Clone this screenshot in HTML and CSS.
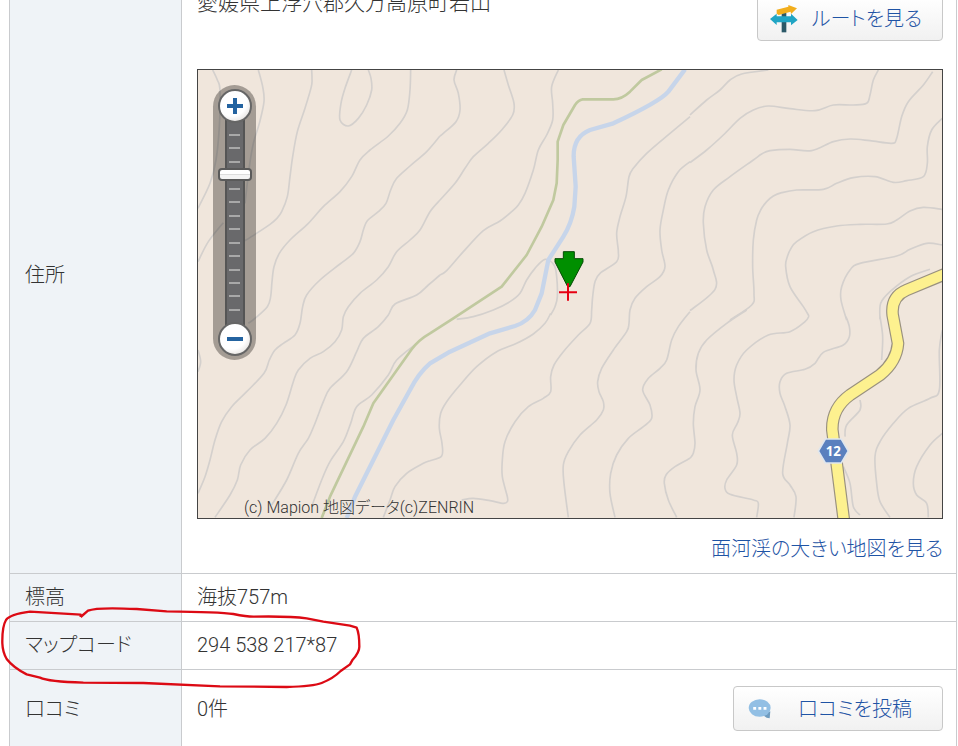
FILE: index.html
```html
<!DOCTYPE html>
<html lang="ja">
<head>
<meta charset="utf-8">
<meta name="viewport" content="width=device-width, initial-scale=1">
<title>面河渓</title>
<link rel="stylesheet" href="styles.css">
</head>
<body>
<main class="page">
<table class="spot">
  <tr>
    <th scope="row">住所</th>
    <td class="place">
      <div class="place-head">
        <p class="address">愛媛県上浮穴郡久万高原町若山</p>
        <a class="btn btn-route" href="#route">
          <svg class="btn-icon" viewBox="0 0 84 84" aria-hidden="true">
            <path fill="#2c5968" d="M35 24h14v58H35z"/>
            <path fill="#f2ae1c" d="M20 14l35-9V0l26 10-18 17-1-7-36 10-6-4z"/>
            <path fill="#20a5c4" d="M0 42l20-16v8h43v-8l20 19-20 16v-9H20v8z"/>
          </svg>
          <span>ルートを見る</span>
        </a>
      </div>
      <div class="map">
        <svg class="map-canvas" viewBox="54 30 2232 1344" role="img" aria-label="面河渓の地図">
          <rect x="54" y="30" width="2232" height="1344" fill="#f0e6dc"/>
          <g class="contours">
            <g>
              <path d="M98 30L112 60 120 90 118 200 108 300 90 370 54 445"/>
              <path d="M235 30L248 80 252 125 238 190 220 250 208 320 195 430"/>
              <path d="M395 30L396 55 394 80 375 145 352 215 338 290 330 350 322 410 305 455 290 476 270 493 225 523 190 545"/>
              <path d="M54 605L85 545 130 488"/>
              <path d="M515 30L495 85 483 130 480 180 505 198 535 175 560 135 575 90 573 55 565 30"/>
              <path d="M692 30L690 90 682 150 660 190 625 228 570 270 540 300 515 350 480 395 430 440 385 490 330 540 298 580 282 620 276 665 272 710 262 740 225 775 205 790"/>
              <path d="M780 228L740 275 690 318 650 355 632 390 618 430 595 455 562 482 550 510 540 545 520 580 480 612 420 660 380 705 368 740 360 790 345 825 310 850 285 870 268 900 252 940 200 995 155 1040 125 1085 105 1140 90 1200 75 1250 54 1300"/>
              <path d="M780 420L750 455 720 510 690 540 650 575 625 620 590 660 540 700 505 740 490 770 485 810 465 845 430 875 390 895 355 930 340 965 318 1035 290 1090 255 1135 210 1170 182 1215 172 1260 150 1305 105 1372"/>
              <path d="M780 645L745 675 710 705 645 732 625 765 595 800 550 835 530 875 500 935 450 985 430 1025 405 1090 385 1135 355 1180 320 1260 275 1335"/>
            </g>
            <g transform="translate(0 750)">
              <path d="M710 100L650 150 625 195 575 255 530 290 512 340 490 395 450 455 425 510 395 590"/>
              <path d="M54 120L62 155 54 185"/>
              <path d="M750 452L730 460 680 490 645 530 630 570 610 622"/>
            </g>
            <g transform="translate(750 0)">
              <path d="M80 30L72 60 85 100 90 150 78 185 40 220 30 228"/>
              <path d="M222 30L235 75 252 130 248 165 215 210 175 250 130 290 105 325 75 370 30 420"/>
              <path d="M385 30L365 80 368 130 368 180 350 225 325 270 310 330 285 400 265 435 245 455 210 483 160 512 100 575 50 632 30 645"/>
              <path d="M362 765L375 740 382 710 380 650 372 615 345 598 315 625 290 660 270 700 240 725 190 750 130 770 80 778"/>
              <path d="M780 170L720 220 650 280 610 325 597 350 588 410 570 470 560 520 565 575 560 605 510 640 495 665 488 710 485 750 480 790 445 825 400 875 372 915 362 950 362 995 340 1015 295 1040 255 1085 225 1145 217 1200 217 1250 232 1310 232 1325 220 1330 180 1322 130 1315 95 1320"/>
              <path d="M780 305L745 335 715 390 700 450 690 510 695 570 705 620 690 650 650 680 615 715 600 750 597 790 590 815 550 870 515 925 503 965 507 995 520 1025 520 1050 500 1080 450 1125 415 1175 400 1215 402 1270 415 1372"/>
            </g>
            <g transform="translate(750 750)">
              <path d="M0 452L35 438 36 400 28 355 32 310 50 275 90 225 140 170 200 125 260 100 310 72 345 40 362 10"/>
              <path d="M780 5L745 50 725 90 710 150 690 175 655 205 638 240 660 285 665 325 640 350 595 385 560 435 542 490 540 550 555 622"/>
              <path d="M780 445L735 470 708 495 703 520 715 570 740 622"/>
            </g>
            <g transform="translate(1530 0)">
              <path d="M0 165L50 120 90 90 120 60 155 42 235 30"/>
              <path d="M0 308L50 270 100 225 150 175 190 150 235 138 300 146 375 152 430 135 490 135 530 130 540 105 550 60 565 30"/>
              <path d="M0 752L75 688 70 630 50 570 40 490 45 440 70 390 120 350 190 300 215 282 240 272 300 268 365 272 430 245 480 237 540 242 605 250 620 235 635 170 655 125 700 75 728 35"/>
              <path d="M120 780L185 735 192 700 188 620 190 540 200 480 212 450 230 425 250 408 275 398 320 390 400 388 440 370 490 353 555 350 610 367 650 362 700 350 712 310 712 260 725 210 757 175"/>
              <path d="M357 768L340 740 300 680 287 620 292 590 303 565 320 545 370 515 440 498 510 493 590 492 620 480 660 453 700 442 757 448"/>
              <path d="M470 780L453 720 455 680 480 630 510 610 620 588 660 568 710 550 757 555"/>
              <path d="M570 778L572 730 600 695 660 650 720 628"/>
            </g>
            <g transform="translate(1530 750)">
              <path d="M357 18L345 35 300 65 235 75 170 120 140 165 132 210 140 260 150 310 142 340 127 375 140 430 140 465 110 510 105 535 120 553 190 570 205 580 200 622"/>
              <path d="M468 20L478 50 478 80 460 105 400 127 375 160 345 178 290 190 270 215 270 250 285 290 300 345 292 400 278 490 300 525 318 560 312 622"/>
              <path d="M170 0L110 40 50 90 25 130 18 180 30 240 15 290 10 340 15 400 10 430 0 445"/>
              <path d="M570 20L578 80 575 150"/>
              <path d="M510 270L510 300 470 345 465 380"/>
              <path d="M460 470L480 520 490 590 510 615"/>
              <path d="M757 60L748 120 748 240 720 265 655 295 610 340 570 395 555 440 560 520 570 575 600 622"/>
              <path d="M757 370L720 405 680 470 670 520 680 555 710 580 715 622"/>
            </g>
          </g>
          <path class="trail" d="M1445 28L1385 60 1350 95Q1325 118 1300 118L1208 118Q1195 120 1185 135L1150 195 1133 245 1133 300 1130 370 1120 420 1085 500 1040 585 965 680 820 775 750 820Q715 840 695 868L580 1030 550 1100 450 1310 425 1374"/>
          <path class="river" d="M1515 28L1465 95Q1440 125 1300 190L1230 210Q1180 230 1181 290L1187 380 1183 440Q1175 490 1150 530L1105 600 1085 700 1065 750Q1045 785 1005 798L930 820 810 875 750 910Q715 940 690 990L640 1080 525 1310 500 1374"/>
          <g class="road">
            <path class="road-edge" d="M2300 640L2180 690Q2132 710 2138 765L2154 850Q2150 905 2100 945L2010 1005Q1955 1045 1957 1110L1970 1210 1992 1384"/>
            <path class="road-fill" d="M2300 640L2180 690Q2132 710 2138 765L2154 850Q2150 905 2100 945L2010 1005Q1955 1045 1957 1110L1970 1210 1992 1384"/>
          </g>
          <path fill="#5a80be" stroke="#dfe6ee" stroke-width="5" d="M1936 1137h48l21 36-21 36h-48l-21-36z"/>
          <text class="route-no" x="1960" y="1188">12</text>
          <path fill="#008f00" stroke="#044c04" stroke-width="3" d="M1150 575h33v21h26v10l-39 74h-7l-38-74v-10h25z"/>
          <path fill="none" stroke="#e60012" stroke-width="6" d="M1137 697h54M1164 670v52"/>
        </svg>
        <div class="zoom">
          <button class="zoom-btn" type="button" aria-label="拡大">
            <svg viewBox="0 0 16 16"><path fill="#2463a0" d="M6 0h4v6h6v4h-6v6H6v-6H0V6h6z"/></svg>
          </button>
          <div class="zoom-track">
            <i></i><i></i><i></i><i></i><i></i><i></i><i></i><i></i><i></i><i></i><i></i><i></i><i></i><i></i>
            <input class="zoom-range" type="range" min="0" max="13" value="3" aria-label="縮尺">
          </div>
          <button class="zoom-btn" type="button" aria-label="縮小">
            <svg viewBox="0 0 16 16"><path fill="#2463a0" d="M0 6h16v4H0z"/></svg>
          </button>
        </div>
        <small class="credit">(c) Mapion 地図データ(c)ZENRIN</small>
      </div>
      <p class="more"><a href="#map">面河渓の大きい地図を見る</a></p>
    </td>
  </tr>
  <tr>
    <th scope="row">標高</th>
    <td>海抜757m</td>
  </tr>
  <tr>
    <th scope="row" class="marked">マップコード
      <svg class="marker-ring" viewBox="0 0 1140 543" aria-hidden="true">
        <path d="M242 156L242 149 90 140Q30 148 18 165Q6 185 7 235Q8 262 20 282Q40 308 80 328L120 338Q145 350 250 353L430 354 660 364 860 366Q940 364 965 354Q1000 340 1022 318L1050 298 1058 284Q1078 262 1078 245Q1078 205 1070 188L1050 182 970 170 920 160Q870 153 760 155Q740 155 700 147Q660 141 500 139L410 132Q290 126 264 137L242 156"/>
      </svg>
    </th>
    <td>294 538 217*87</td>
  </tr>
  <tr class="reviews">
    <th scope="row">口コミ</th>
    <td>
      <div class="review-line">
        <span>0件</span>
        <a class="btn btn-review" href="#review">
          <svg class="btn-icon" viewBox="0 0 72 62" aria-hidden="true">
            <path fill="#6f9cc0" d="M48 46l20-8-2 22q-10 0-18-8z"/>
            <ellipse cx="35" cy="28" rx="34" ry="27" fill="#92bfe4"/>
            <path fill="#fff" d="M15 25h9v8h-9zM31 25h9v8h-9zM47 25h9v8h-9z"/>
          </svg>
          <span>口コミを投稿</span>
        </a>
      </div>
    </td>
  </tr>
</table>
</main>
<script src="contours.js"></script>
</body>
</html>
```
FILE: contours.js
```js
// Rounds the surveyed contour points into smooth Catmull-Rom curves.
document.querySelectorAll('.contours path').forEach(function (path) {
  var n = path.getAttribute('d').match(/-?\d+/g).map(Number);
  var p = [];
  for (var i = 0; i < n.length; i += 2) p.push([n[i], n[i + 1]]);
  var d = 'M' + p[0];
  for (var k = 0; k < p.length - 1; k++) {
    var a = p[k - 1] || p[k], b = p[k], c = p[k + 1], e = p[k + 2] || c;
    d += 'C' + [
      b[0] + (c[0] - a[0]) / 6, b[1] + (c[1] - a[1]) / 6,
      c[0] - (e[0] - b[0]) / 6, c[1] - (e[1] - b[1]) / 6,
      c[0], c[1]
    ];
  }
  path.setAttribute('d', d);
});
```
FILE: styles.css
```css
* {
  box-sizing: border-box;
}

body {
  margin: 0;
  background: #fff;
  color: #333;
  font: 300 20px/30px Roboto, "Noto Sans CJK JP", sans-serif;
  font-feature-settings: "palt";
}

p {
  margin: 0;
}

a {
  color: #1f54a5;
  text-decoration: none;
}

.page {
  height: 100vh;
  overflow: hidden;
  padding: 0 1px 0 9px;
}

.spot {
  width: 100%;
  margin-top: -24px;
  border-collapse: collapse;
  table-layout: fixed;
}

.spot th,
.spot td {
  border: 1px solid #c9cbce;
  padding: 8px 13px 9px 15px;
  text-align: left;
  font-weight: 300;
  vertical-align: middle;
}

.spot th {
  width: 172px;
  background: #eff3f7;
}

.spot .place {
  padding-top: 11px;
}

.place-head {
  display: flex;
  justify-content: space-between;
  align-items: flex-start;
  margin-bottom: 28px;
}

.address {
  font-size: 21px;
}

.btn {
  display: flex;
  align-items: center;
  height: 45px;
  border: 1px solid #c8c8c8;
  border-radius: 4px;
  background: linear-gradient(#fff, #f1f1f1);
}

.btn-route {
  margin-top: 8px;
  padding: 0 20px 0 12px;
  gap: 14px;
}

.btn-route .btn-icon {
  width: 28px;
  height: 28px;
}

.btn-review {
  padding: 0 30px 0 14px;
  gap: 26px;
}

.btn-review .btn-icon {
  width: 24px;
  height: 20px;
}

.map {
  position: relative;
  border: 1px solid #444;
}

.map-canvas {
  display: block;
  width: 100%;
  height: auto;
}

.contours path {
  fill: none;
  stroke: #d4d0cd;
  stroke-width: 5;
  stroke-linejoin: round;
}

.trail {
  fill: none;
  stroke: #c0c99f;
  stroke-width: 8;
  stroke-linejoin: round;
}

.river {
  fill: none;
  stroke: #c7d5ea;
  stroke-width: 13;
  stroke-linejoin: round;
}

.road path {
  fill: none;
  stroke-linejoin: round;
}

.road .road-edge {
  stroke: #99917f;
  stroke-width: 38;
}

.road .road-fill {
  stroke: #fdf18f;
  stroke-width: 31;
}

.route-no {
  fill: #fff;
  font: 700 40px "Noto Sans", sans-serif;
  text-anchor: middle;
}

.zoom {
  position: absolute;
  top: 15px;
  left: 15px;
  display: flex;
  flex-direction: column;
  align-items: center;
  width: 43px;
  height: 275px;
  padding: 4px 0;
  border-radius: 22px;
  background: rgba(50, 45, 40, 0.4);
}

.zoom-btn {
  position: relative;
  z-index: 1;
  display: grid;
  place-items: center;
  width: 34px;
  height: 34px;
  padding: 0;
  border: 2px solid #666;
  border-radius: 50%;
  background: radial-gradient(circle at 40% 35%, #fff 55%, #d5d0cc);
}

.zoom-btn svg {
  width: 16px;
  height: 16px;
}

.zoom-track {
  position: relative;
  flex: 1;
  display: flex;
  flex-direction: column;
  justify-content: space-between;
  align-items: center;
  width: 20px;
  margin: -6px 0;
  padding: 17px 0;
  border: solid #555;
  border-width: 0 2px;
  background: #69696b;
}

.zoom-track i {
  width: 11px;
  height: 2px;
  background: #a8a8a8;
}

.zoom-range {
  position: absolute;
  top: 11px;
  left: -9px;
  width: 34px;
  height: 188px;
  margin: 0;
  appearance: none;
  writing-mode: vertical-lr;
  background: transparent;
}

.zoom-range::-webkit-slider-thumb {
  appearance: none;
  width: 34px;
  height: 13px;
  border: 2px solid #5a5a5a;
  border-radius: 4px;
  background: linear-gradient(#fff 40%, #ddd 40%, #ddd 60%, #f4f4f4 60%);
}

.credit {
  position: absolute;
  left: 46px;
  bottom: 0;
  font-size: 16px;
  line-height: 20px;
}

.more {
  padding-top: 15px;
  text-align: right;
}

.marked {
  position: relative;
}

.marker-ring {
  position: absolute;
  z-index: 1;
  top: -57px;
  left: -10px;
  width: 380px;
  height: 181px;
  pointer-events: none;
}

.marker-ring path {
  fill: none;
  stroke: #dc0a14;
  stroke-width: 7;
  stroke-linejoin: round;
}

.reviews th,
.reviews td {
  padding-top: 16px;
  padding-bottom: 16px;
}

.review-line {
  display: flex;
  justify-content: space-between;
  align-items: center;
}
```
